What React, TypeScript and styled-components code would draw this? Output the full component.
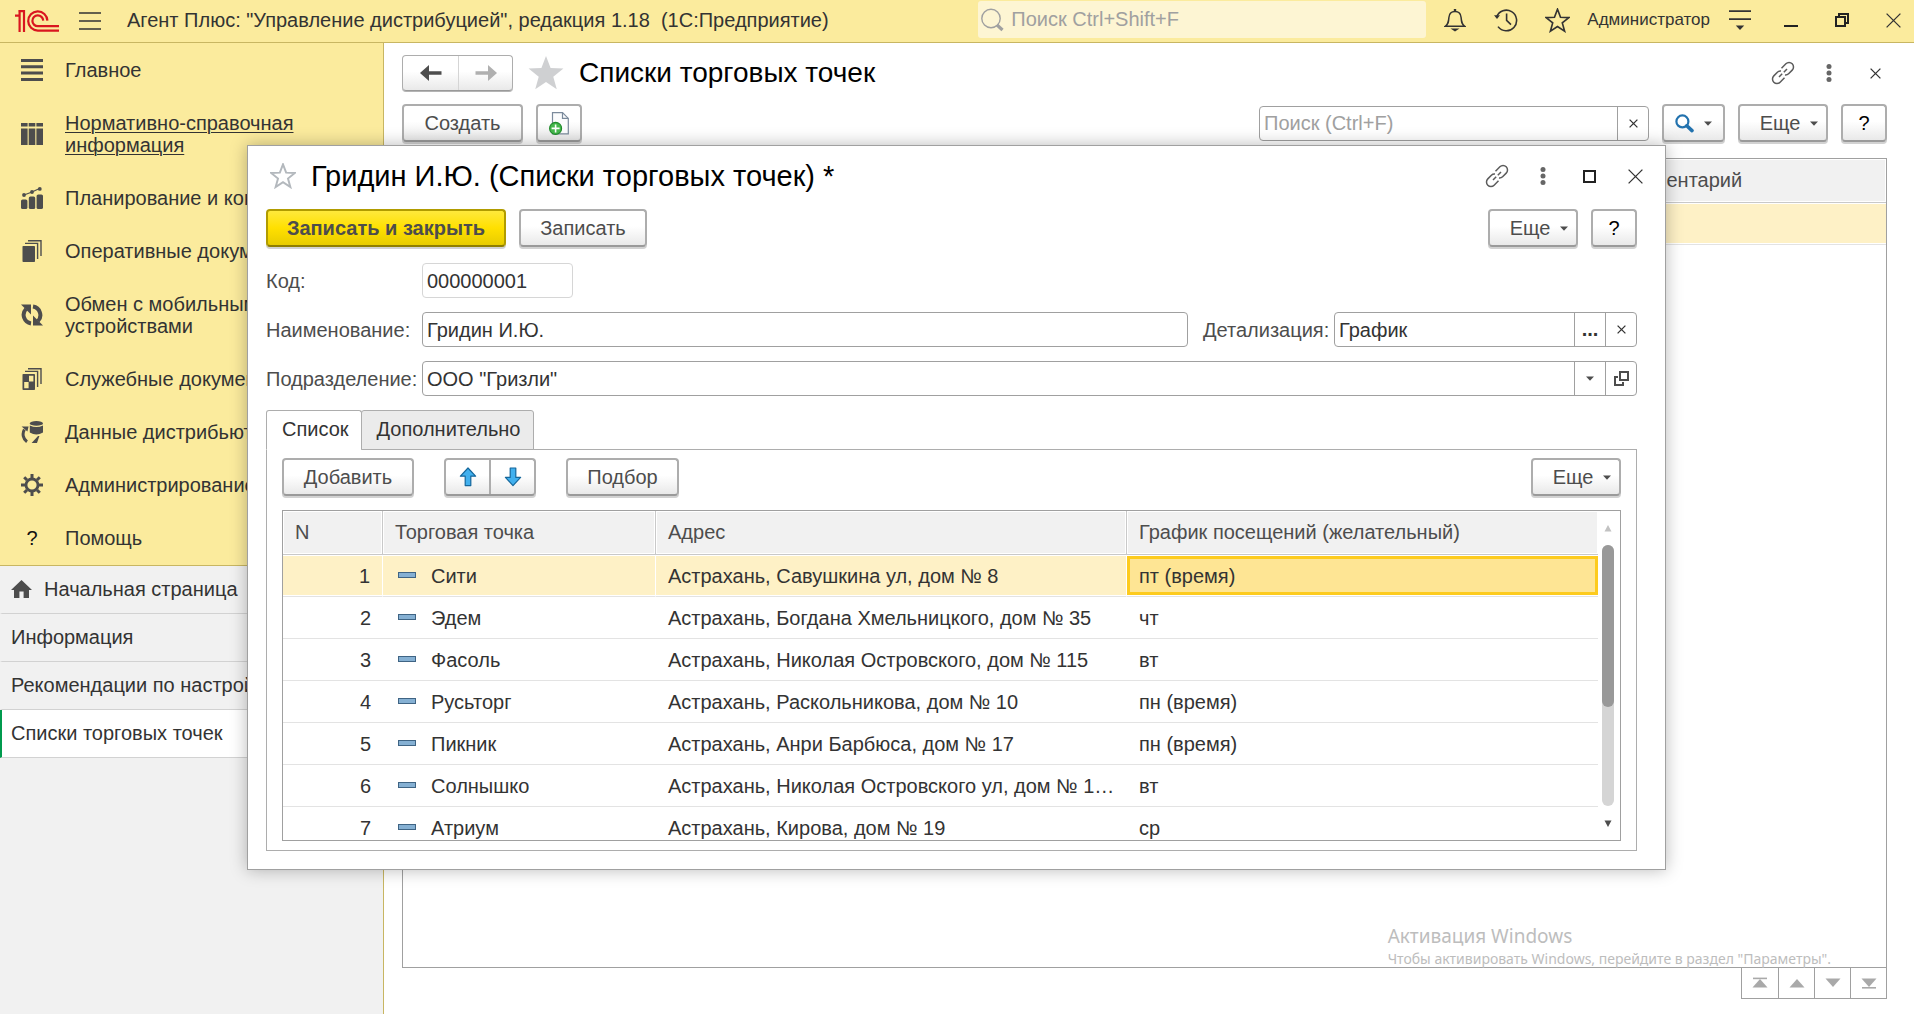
import React from 'react';
import styled, { createGlobalStyle, css } from 'styled-components';

const GlobalStyle = createGlobalStyle`
  *, *::before, *::after { box-sizing: border-box; }
  body { margin: 0; background: #fff; }
  body, button, input, table {
    font-family: "Liberation Sans", Arial, sans-serif;
    font-size: 20px;
    line-height: 23px;
    color: #333;
  }
  button { margin: 0; padding: 0; border: 0; background: none; cursor: pointer; }
  svg { display: block; flex: none; }
`;

const Page = styled.div`
  position: relative;
  display: flex;
  flex-direction: column;
  min-height: 100vh;
  overflow: hidden;
`;

/* ---------- top bar ---------- */

const TopBar = styled.header`
  display: flex;
  align-items: center;
  height: 43px;
  padding: 0 9px 0 15px;
  background: #fbeb9d;
  border-bottom: 1px solid #c8b662;
`;

const IconButton = styled.button<{ $w?: number }>`
  display: flex;
  align-items: center;
  justify-content: center;
  flex: none;
  width: ${p => p.$w ?? 24}px;
  height: 32px;
`;

const MenuButton = styled(IconButton)`
  margin: 0 25px 0 19px;
`;

const AppTitle = styled.div`
  flex: 1;
  white-space: nowrap;
  padding-bottom: 2px;
`;

const GlobalSearch = styled.label`
  display: flex;
  align-items: center;
  gap: 7px;
  width: 448px;
  height: 37px;
  margin-bottom: 4px;
  padding: 1px 0 0 3px;
  border-radius: 3px;
  background: #fdf5d3;
`;

const BareInput = styled.input`
  flex: 1;
  min-width: 0;
  height: 100%;
  padding: 0;
  border: 0;
  outline: 0;
  background: transparent;
  &::placeholder { color: #a0a0a0; opacity: 1; }
`;

const TopIcons = styled.div`
  display: flex;
  align-items: center;
  gap: 27px;
  padding: 0 18px 2px 17px;
`;

const UserLink = styled.a`
  color: #333;
  font-size: 17px;
  text-decoration: none;
  padding-bottom: 4px;
`;

const WindowButtons = styled.div`
  display: flex;
  align-items: center;
  gap: 27px;
  padding: 0 0 2px 18px;
`;

/* ---------- left panel ---------- */

const Body = styled.div`
  display: flex;
  flex: 1;
`;

const Sidebar = styled.aside`
  flex: none;
  width: 384px;
  background: #f1f1f1;
  border-right: 1px solid #c8b662;
`;

const Sections = styled.nav`
  padding-bottom: 1px;
  background: #fbeb9d;
  border-bottom: 1px solid #c8b662;
`;

const Section = styled.a<{ $underlined?: boolean }>`
  display: flex;
  align-items: center;
  gap: 22px;
  padding: 16px 30px 15px 21px;
  color: #333;
  line-height: 22px;
  text-decoration: ${p => (p.$underlined ? 'underline' : 'none')};
  text-underline-offset: 2px;
  text-decoration-thickness: 1px;
`;

const SectionIcon = styled.span`
  display: flex;
  align-items: center;
  justify-content: center;
  flex: none;
  width: 22px;
  height: 22px;
  color: #111;
`;

const OpenPage = styled.a<{ $active?: boolean }>`
  display: flex;
  align-items: center;
  gap: 12px;
  height: 48px;
  padding: 0 12px 1px 9px;
  border-left: 2px solid ${p => (p.$active ? '#009a4d' : 'transparent')};
  border-bottom: 1px solid #d2d2d2;
  background: ${p => (p.$active ? '#fff' : 'transparent')};
  color: #333;
  text-decoration: none;
  white-space: nowrap;
`;

/* ---------- shared form parts ---------- */

const buttonFace = css`
  border: 2px solid #adadad;
  border-bottom-color: #9a9a9a;
  border-radius: 4px;
  background: linear-gradient(#fff 45%, #e9e9e9);
  box-shadow: 0 2px 0 #d2d2d2;
`;

const Button = styled.button<{ $w: number; $primary?: boolean }>`
  display: flex;
  align-items: center;
  justify-content: center;
  flex: none;
  gap: 10px;
  width: ${p => p.$w}px;
  height: 38px;
  color: #4d4d4d;
  ${buttonFace}
  ${p =>
    p.$primary &&
    css`
      border-color: #b19c00;
      border-bottom-color: #8f7e00;
      background: linear-gradient(#ffe93c, #ffe000 50%, #e8cc00);
      font-weight: bold;
    `}
`;

const HelpButton = styled(Button)`
  color: #000;
`;

const MoreButtonBox = styled(Button)`
  padding-left: 12px;
`;

const PairBox = styled.div`
  display: flex;
  flex: none;
  height: 38px;
  ${buttonFace}
`;

const PairHalf = styled.button<{ $w: number; $divider?: boolean }>`
  display: flex;
  align-items: center;
  justify-content: center;
  width: ${p => p.$w}px;
  border-right: ${p => (p.$divider ? '2px solid #adadad' : '0')};
`;

const HistoryBox = styled(PairBox)`
  height: 36px;
  border-width: 1px;
  box-shadow: 0 1px 0 #b4b4b4;
  ${PairHalf}:first-child { border-right: 1px solid #d5d5d5; }
`;

const FieldBox = styled.div<{ $w?: number; $readOnly?: boolean }>`
  display: flex;
  flex: ${p => (p.$w ? 'none' : '1')};
  width: ${p => (p.$w ? `${p.$w}px` : 'auto')};
  height: 35px;
  border: 1px solid ${p => (p.$readOnly ? '#d6d6d6' : '#a0a0a0')};
  border-radius: 4px;
  background: #fff;
  ${BareInput} { padding: 1px 4px 0; }
`;

const FieldButton = styled.button`
  display: flex;
  align-items: center;
  justify-content: center;
  flex: none;
  width: 31px;
  border-left: 1px solid #a0a0a0;
  font-weight: bold;
`;

const Toolbar = styled.div`
  display: flex;
  align-items: center;
  gap: 13px;
`;

const Spacer = styled.div`
  flex: 1;
`;

/* ---------- list page ---------- */

const Main = styled.main`
  display: flex;
  flex-direction: column;
  flex: 1;
  min-width: 0;
  padding: 12px 27px 15px 18px;
`;

const TitleRow = styled.div`
  display: flex;
  align-items: center;
  height: 36px;
  margin-bottom: 13px;
`;

const FormTitle = styled.h1`
  flex: 1;
  margin: 0;
  font-size: 28px;
  line-height: 36px;
  font-weight: normal;
  color: #000;
  white-space: nowrap;
`;

const FavoriteButton = styled(IconButton)`
  margin: 0 14px;
`;

const TitleTools = styled.div`
  display: flex;
  align-items: center;
  gap: 22px;
`;

const SearchGroup = styled.div`
  display: flex;
  gap: 13px;
  align-items: center;
`;

const ListFrame = styled.div`
  flex: 1;
  margin-top: 16px;
  border: 1px solid #a0a0a0;
`;

const Grid = styled.table`
  width: 100%;
  table-layout: fixed;
  border-collapse: separate;
  border-spacing: 0;
`;

const HeadCell = styled.th`
  height: 44px;
  padding: 0 12px 1px;
  border-bottom: 1px solid #c9c9c9;
  background: #f1f1f1;
  box-shadow: inset 0 0 0 1px #fff;
  color: #4d4d4d;
  font-weight: normal;
  text-align: left;
  white-space: nowrap;
  &:not(:last-child) { border-right: 1px solid #c9c9c9; }
`;

const Cell = styled.td<{ $selected?: boolean; $current?: boolean; $right?: boolean }>`
  height: 42px;
  padding: 2px 12px 0;
  overflow: hidden;
  border-bottom: 1px solid #e3e3e3;
  text-align: ${p => (p.$right ? 'right' : 'left')};
  text-overflow: ellipsis;
  white-space: nowrap;
  ${p =>
    p.$selected &&
    css`
      background: #fef1c6;
      box-shadow: inset 0 1px #fff, inset 0 -1px #fff;
      &:not(:last-child) { border-right: 1px solid #fff; }
    `}
  ${p =>
    p.$current &&
    css`
      background: #fee594;
      box-shadow: inset 0 1px #fff, inset 0 -1px #fff, inset 0 4px #fdcb1e,
        inset 0 -4px #fdcb1e, inset 3px 0 #fdcb1e, inset -3px 0 #fdcb1e;
    `}
`;

const Pager = styled.div`
  display: flex;
  align-self: flex-end;
  border: 1px solid #a0a0a0;
  border-top: 0;
`;

const PagerButton = styled.button`
  display: flex;
  align-items: center;
  justify-content: center;
  width: 36px;
  height: 30px;
  & + & { border-left: 1px solid #a0a0a0; }
`;

const Watermark = styled.div`
  position: absolute;
  right: 83px;
  bottom: 45px;
  color: #bdbdbd;
  font-family: "Noto Sans", sans-serif;
  font-size: 14px;
  line-height: 20px;
  white-space: nowrap;
`;

const WatermarkTitle = styled.div`
  font-size: 19px;
  line-height: 26px;
`;

/* ---------- item window ---------- */

const Dialog = styled.section`
  position: absolute;
  top: 145px;
  left: 247px;
  right: 248px;
  padding: 12px 28px 18px 18px;
  border: 1px solid #a0a0a0;
  background: #fff;
  box-shadow: 0 0 16px rgba(0, 0, 0, 0.28);
`;

const DialogTitleRow = styled(TitleRow)`
  margin-bottom: 15px;
`;

const DialogTitle = styled(FormTitle)`
  font-size: 29px;
`;

const DialogStar = styled(IconButton)`
  margin: 0 16px 0 5px;
`;

const DialogTools = styled(TitleTools)`
  margin-right: -10px;
`;

const FormRows = styled.div`
  display: flex;
  flex-direction: column;
  gap: 14px;
  margin: 16px 0 14px;
`;

const FormRow = styled.div`
  display: flex;
  align-items: center;
`;

const Label = styled.label`
  flex: none;
  width: 156px;
  padding-top: 1px;
  color: #4d4d4d;
  white-space: nowrap;
`;

const InlineLabel = styled(Label)`
  width: 131px;
  margin-left: 15px;
`;

const Tabs = styled.div`
  display: flex;
`;

const Tab = styled.button<{ $active?: boolean }>`
  height: 40px;
  padding: 0 12px 1px 15px;
  margin-bottom: -1px;
  border: 1px solid #adadad;
  border-bottom-color: ${p => (p.$active ? '#fff' : '#adadad')};
  border-radius: 3px 3px 0 0;
  background: ${p => (p.$active ? '#fff' : '#ebebeb')};
  & + & { margin-left: -1px; }
`;

const TabPanel = styled.div`
  padding: 8px 15px 9px;
  border: 1px solid #adadad;
`;

const PointsToolbar = styled(Toolbar)`
  gap: 30px;
  margin-bottom: 14px;
`;

const PointsFrame = styled.div`
  display: flex;
  height: 331px;
  overflow: hidden;
  border: 1px solid #a0a0a0;
`;

const PointsGridBox = styled.div`
  flex: 1;
  min-width: 0;
`;

const ScrollBar = styled.div`
  display: flex;
  flex-direction: column;
  flex: none;
  width: 22px;
  padding: 0 6px 0 4px;
`;

const ScrollArrow = styled.button`
  display: flex;
  align-items: center;
  justify-content: center;
  height: 34px;
`;

const ScrollTrack = styled.div`
  flex: 1;
  border-radius: 6px;
  background: #d5d5d5;
`;

const ScrollThumb = styled.div`
  height: 62%;
  border-radius: 6px;
  background: #999;
`;

const PointName = styled.span`
  display: flex;
  align-items: center;
  gap: 15px;
  padding-left: 3px;
`;

const PointMark = styled.span`
  width: 18px;
  height: 6px;
  margin-bottom: 4px;
  border: 1px solid #3f6484;
  background: #85b0d3;
`;

/* ---------- drawings ---------- */

const Logo = () => (
  <svg width="44" height="22" viewBox="0 0 44 22" fill="none" stroke="#d9161f" strokeWidth="2.2">
    <path d="M0 5.6H4.6V22M3.4 1.2H9V22M4.6 1.2V5.6" />
    <path d="M32.4 10.6A9.6 9.6 0 1 0 22.8 20.6H44M28.2 10.6A5.4 5.4 0 1 0 22.8 16.2H44" />
  </svg>
);

const Burger = () => (
  <svg width="22" height="18" viewBox="0 0 22 18" stroke="#333" strokeWidth="1.6">
    <path d="M0 1H22M0 9H22M0 17H22" />
  </svg>
);

const Loupe = () => (
  <svg width="23" height="24" viewBox="0 0 23 24" fill="none" stroke="#a0a0a0">
    <circle cx="10" cy="10.5" r="9.2" strokeWidth="1.4" />
    <path d="M16 17L21.5 22" strokeWidth="3.2" />
  </svg>
);

const Bell = () => (
  <svg width="22" height="24" viewBox="0 0 22 24" fill="none" stroke="#333" strokeWidth="1.5">
    <path d="M1.2 18.3C4.5 16 4.6 13.5 4.9 9.5C5.2 5.6 7.5 3.6 11 3.6S16.8 5.6 17.1 9.5C17.4 13.5 17.5 16 20.8 18.3Z" />
    <path d="M11 1V3.5" strokeWidth="2.4" />
    <path d="M6.5 20.5H15.5L11 23.6Z" fill="#333" stroke="none" />
  </svg>
);

const HistoryIcon = () => (
  <svg width="24" height="24" viewBox="0 0 24 24" fill="none" stroke="#333" strokeWidth="1.6">
    <path d="M2.6 9A10.3 10.3 0 1 1 4 18.6" />
    <path d="M0 7.2L6 7.2L3 11Z" fill="#333" stroke="none" />
    <path d="M12.6 5.5V12.4L17 16.6" />
  </svg>
);

const starPath = 'M12 1.2L14.9 8.9L23 9.2L16.6 14.3L18.8 22.2L12 17.7L5.2 22.2L7.4 14.3L1 9.2L9.1 8.9Z';

const Star = ({ size, stroke, fill = 'none', width = 1.6 }: { size: number; stroke: string; fill?: string; width?: number }) => (
  <svg width={size} height={size} viewBox="0 0 24 24" fill={fill} stroke={stroke} strokeWidth={width}>
    <path d={starPath} />
  </svg>
);

const PanelMenu = () => (
  <svg width="22" height="20" viewBox="0 0 22 20" fill="none" stroke="#333" strokeWidth="1.7">
    <path d="M0 1.2H22M0 9.2H22" />
    <path d="M6.8 15.4H15.2L11 20Z" fill="#333" stroke="none" />
  </svg>
);

const Minimize = () => (
  <svg width="14" height="14" viewBox="0 0 14 14" stroke="#222" strokeWidth="2">
    <path d="M0 13H14" />
  </svg>
);

const Restore = () => (
  <svg width="14" height="14" viewBox="0 0 14 14" fill="none" stroke="#222" strokeWidth="2">
    <path d="M1 4H10V13H1ZM4 4V1H13V10H10" />
  </svg>
);

const Maximize = () => (
  <svg width="13" height="13" viewBox="0 0 13 13" fill="none" stroke="#222" strokeWidth="2">
    <path d="M1 1H12V12H1Z" />
  </svg>
);

const Cross = ({ size, width = 1.3, color = '#333' }: { size: number; width?: number; color?: string }) => (
  <svg width={size} height={size} viewBox={`0 0 ${size} ${size}`} stroke={color} strokeWidth={width}>
    <path d={`M0.6 0.6L${size - 0.6} ${size - 0.6}M${size - 0.6} 0.6L0.6 ${size - 0.6}`} />
  </svg>
);

const LinkIcon = () => (
  <svg width="24" height="24" viewBox="0 0 24 24" fill="none" stroke="#5c5c5c" strokeWidth="1.5">
    <path d="M10.5 7.2L14.9 2.8A4.4 4.4 0 0 1 21.2 9.1L17.6 12.7A4.4 4.4 0 0 1 14 13.9" />
    <path d="M13.5 16.8L9.1 21.2A4.4 4.4 0 0 1 2.8 14.9L6.4 11.3A4.4 4.4 0 0 1 10 10.1" />
    <path d="M8 16L11.2 12.8M12.8 11.2L16 8" />
  </svg>
);

const Dots = () => (
  <svg width="6" height="18" viewBox="0 0 6 18" fill="#666">
    <circle cx="3" cy="2.6" r="2.5" />
    <circle cx="3" cy="9" r="2.5" />
    <circle cx="3" cy="15.4" r="2.5" />
  </svg>
);

const Caret = ({ color = '#4d4d4d' }: { color?: string }) => (
  <svg width="8" height="5" viewBox="0 0 8 5" fill={color}>
    <path d="M0 0.5H8L4 4.8Z" />
  </svg>
);

const NavArrow = ({ color, flip }: { color: string; flip?: boolean }) => (
  <svg width="22" height="16" viewBox="0 0 22 16" fill={color}>
    <path d={flip ? 'M22 8L13 0V6.2H0.5V9.8H13V16Z' : 'M0 8L9 0V6.2H21.5V9.8H9V16Z'} />
  </svg>
);

const MoveArrow = ({ down }: { down?: boolean }) => (
  <svg width="18" height="20" viewBox="0 0 18 20" fill="#41b0ee" stroke="#14679c" strokeWidth="1.2" strokeLinejoin="round">
    <path d={down ? 'M9 18.6L16.6 10.4H11.8V1H6.2V10.4H1.4Z' : 'M9 1L16.6 9.2H11.8V18.6H6.2V9.2H1.4Z'} />
  </svg>
);

const NewDocument = () => (
  <svg width="20" height="23" viewBox="0 0 20 23">
    <path d="M3.5 .6H13.5L19.3 6.4V21.8H3.5Z" fill="#fbfcfd" stroke="#7b8a9c" strokeWidth="1.2" />
    <path d="M13.5 .6V6.4H19.3" fill="none" stroke="#7b8a9c" strokeWidth="1.2" />
    <circle cx="6.6" cy="16.4" r="6" fill="#45b84c" stroke="#208a2c" strokeWidth="1.1" />
    <path d="M2.6 16.4H10.6M6.6 12.4V20.4" stroke="#fff" strokeWidth="1.6" />
  </svg>
);

const FindIcon = () => (
  <svg width="19" height="19" viewBox="0 0 19 19" fill="none" stroke="#2272ae">
    <circle cx="7.4" cy="7.4" r="6" strokeWidth="2.2" />
    <path d="M11.8 11.8L17 16.6" strokeWidth="3.6" strokeLinecap="round" />
  </svg>
);

const OpenIcon = () => (
  <svg width="15" height="15" viewBox="0 0 15 15" fill="none" stroke="#4d4d4d" strokeWidth="2">
    <path d="M6 1H14V9H6Z" />
    <path d="M4 6H1V14H9V11" />
  </svg>
);

const Triangle = ({ down, bar }: { down?: boolean; bar?: boolean }) => (
  <svg width="16" height="12" viewBox="0 0 16 12" fill="#a9a9a9">
    <path d={down ? 'M0.5 1.5H15.5L8 10Z' : 'M0.5 10.5H15.5L8 2Z'} />
    {bar && <path d={down ? 'M1 10H15V11.6H1Z' : 'M1 .6H15V2.2H1Z'} />}
  </svg>
);

const ScrollMark = ({ down, color }: { down?: boolean; color: string }) => (
  <svg width="8" height="7" viewBox="0 0 8 7" fill={color}>
    <path d={down ? 'M0.5 0.5H7.5L4 7Z' : 'M0.5 6.5H7.5L4 0Z'} />
  </svg>
);

const Home = () => (
  <svg width="21" height="18" viewBox="0 0 21 18" fill="#4d4d4d">
    <path d="M10.5 0L21 10H18V18H12.6V11.6H8.4V18H3V10H0Z" />
  </svg>
);

const Glyph = ({ children }: { children: React.ReactNode }) => (
  <svg width="22" height="22" viewBox="0 0 22 22" fill="#4d4d4d">
    {children}
  </svg>
);

const ListGlyph = () => (
  <Glyph><path d="M0 0H22V3H0ZM0 6.3H22V9.3H0ZM0 12.6H22V15.6H0ZM0 19H22V22H0Z" /></Glyph>
);
const ColumnsGlyph = () => (
  <Glyph><path d="M0 0H6.6V3.6H0ZM7.7 0H14.3V3.6H7.7ZM15.4 0H22V3.6H15.4ZM0 5.4H6.6V22H0ZM7.7 5.4H14.3V22H7.7ZM15.4 5.4H22V22H15.4Z" /></Glyph>
);
const ChartGlyph = () => (
  <Glyph>
    <rect x="0" y="12.5" width="6.4" height="9.5" rx="1.6" />
    <rect x="7.8" y="9.5" width="6.4" height="12.5" rx="1.6" />
    <rect x="15.6" y="7.5" width="6.4" height="14.5" rx="1.6" />
    <path d="M3 8L11 5L18.5 1.5" fill="none" stroke="#4d4d4d" strokeWidth="1.2" />
    <circle cx="3" cy="8" r="1.9" /><circle cx="11" cy="5" r="1.9" /><circle cx="18.8" cy="1.9" r="1.9" />
  </Glyph>
);
const StackGlyph = ({ checked }: { checked?: boolean }) => (
  <Glyph>
    <rect x="1.5" y="6" width="12.5" height="16" rx="0.8" />
    <path d="M4 3.4H16.6V19M7 .8H20V16" fill="none" stroke="#4d4d4d" strokeWidth="1.4" />
    {checked && <path d="M8 7.8H12.4V13.6H8ZM3.2 14H7.6V20.2H3.2Z" fill="#fbeb9d" />}
  </Glyph>
);
const ExchangeGlyph = () => (
  <Glyph>
    <path d="M10 19.4A8.6 8.6 0 0 1 5 5M12 2.6A8.6 8.6 0 0 1 17 17" fill="none" stroke="#4d4d4d" strokeWidth="4" />
    <path d="M0 0.6H10V10.4L7 7.4L4 4.6ZM22 21.4H12V11.6L15 14.6L18 17.4Z" />
  </Glyph>
);
const DataGlyph = () => (
  <Glyph>
    <ellipse cx="15.4" cy="2.4" rx="6.6" ry="2.4" />
    <path d="M8.8 4.6Q15.4 7.6 22 4.6V11.4Q15.4 15.4 8.8 11.4Z" />
    <path d="M6 20.8A9.4 9.4 0 0 1 3.4 8.4" fill="none" stroke="#4d4d4d" strokeWidth="3" />
    <path d="M0.6 5.6H7.6L6.4 10.6ZM17 15L10.6 22H16L18.4 15Z" />
  </Glyph>
);
const GearGlyph = () => (
  <svg width="22" height="22" viewBox="0 0 22 22" fill="none" stroke="#4d4d4d">
    <circle cx="11" cy="11" r="6" strokeWidth="2.8" />
    <path d="M11 0V4M11 18V22M0 11H4M18 11H22M3.2 3.2L6 6M16 16L18.8 18.8M3.2 18.8L6 16M16 6L18.8 3.2" strokeWidth="3" />
  </svg>
);

/* ---------- data ---------- */

const sections = [
  { text: 'Главное', icon: <ListGlyph /> },
  { text: 'Нормативно-справочная информация', icon: <ColumnsGlyph />, underlined: true },
  { text: 'Планирование и контроль', icon: <ChartGlyph /> },
  { text: 'Оперативные документы', icon: <StackGlyph /> },
  { text: 'Обмен с мобильными устройствами', icon: <ExchangeGlyph /> },
  { text: 'Служебные документы', icon: <StackGlyph checked /> },
  { text: 'Данные дистрибьютора', icon: <DataGlyph /> },
  { text: 'Администрирование', icon: <GearGlyph /> },
  { text: 'Помощь', icon: '?' },
];

const points = [
  ['Сити', 'Астрахань, Савушкина ул, дом № 8', 'пт (время)'],
  ['Эдем', 'Астрахань, Богдана Хмельницкого, дом № 35', 'чт'],
  ['Фасоль', 'Астрахань, Николая Островского, дом № 115', 'вт'],
  ['Русьторг', 'Астрахань, Раскольникова, дом № 10', 'пн (время)'],
  ['Пикник', 'Астрахань, Анри Барбюса, дом № 17', 'пн (время)'],
  ['Солнышко', 'Астрахань, Николая Островского ул, дом № 148а', 'вт'],
  ['Атриум', 'Астрахань, Кирова, дом № 19', 'ср'],
];

const MoreButton = () => (
  <MoreButtonBox $w={90}>
    Еще
    <Caret />
  </MoreButtonBox>
);

const ItemWindow = () => (
  <Dialog role="dialog" aria-labelledby="item-title">
    <DialogTitleRow>
      <DialogStar aria-label="В избранное"><Star size={26} stroke="#b3b8bd" width={1.8} /></DialogStar>
      <DialogTitle as="h2" id="item-title">Гридин И.Ю. (Списки торговых точек) *</DialogTitle>
      <DialogTools>
        <IconButton aria-label="Ссылка"><LinkIcon /></IconButton>
        <IconButton aria-label="Действия"><Dots /></IconButton>
        <IconButton aria-label="Развернуть"><Maximize /></IconButton>
        <IconButton aria-label="Закрыть"><Cross size={15} /></IconButton>
      </DialogTools>
    </DialogTitleRow>

    <Toolbar>
      <Button $w={240} $primary>Записать и закрыть</Button>
      <Button $w={128}>Записать</Button>
      <Spacer />
      <MoreButton />
      <HelpButton $w={46}>?</HelpButton>
    </Toolbar>

    <FormRows>
      <FormRow>
        <Label htmlFor="code">Код:</Label>
        <FieldBox $w={151} $readOnly><BareInput id="code" defaultValue="000000001" readOnly /></FieldBox>
      </FormRow>
      <FormRow>
        <Label htmlFor="name">Наименование:</Label>
        <FieldBox><BareInput id="name" defaultValue="Гридин И.Ю." /></FieldBox>
        <InlineLabel htmlFor="detail">Детализация:</InlineLabel>
        <FieldBox $w={303}>
          <BareInput id="detail" defaultValue="График" />
          <FieldButton aria-label="Выбрать">...</FieldButton>
          <FieldButton aria-label="Очистить"><Cross size={9} /></FieldButton>
        </FieldBox>
      </FormRow>
      <FormRow>
        <Label htmlFor="division">Подразделение:</Label>
        <FieldBox>
          <BareInput id="division" defaultValue={'ООО "Гризли"'} />
          <FieldButton aria-label="Список"><Caret /></FieldButton>
          <FieldButton aria-label="Открыть"><OpenIcon /></FieldButton>
        </FieldBox>
      </FormRow>
    </FormRows>

    <Tabs role="tablist">
      <Tab role="tab" aria-selected $active>Список</Tab>
      <Tab role="tab" aria-selected={false}>Дополнительно</Tab>
    </Tabs>
    <TabPanel role="tabpanel">
      <PointsToolbar>
        <Button $w={132}>Добавить</Button>
        <PairBox>
          <PairHalf $w={45} $divider aria-label="Вверх"><MoveArrow /></PairHalf>
          <PairHalf $w={43} aria-label="Вниз"><MoveArrow down /></PairHalf>
        </PairBox>
        <Button $w={113}>Подбор</Button>
        <Spacer />
        <MoreButton />
      </PointsToolbar>
      <PointsFrame>
        <PointsGridBox>
          <Grid>
            <colgroup>
              <col style={{ width: 100 }} />
              <col style={{ width: 273 }} />
              <col style={{ width: 471 }} />
              <col />
            </colgroup>
            <thead>
              <tr>
                <HeadCell>N</HeadCell>
                <HeadCell>Торговая точка</HeadCell>
                <HeadCell>Адрес</HeadCell>
                <HeadCell>График посещений (желательный)</HeadCell>
              </tr>
            </thead>
            <tbody>
              {points.map(([name, address, schedule], i) => (
                <tr key={name}>
                  <Cell $right $selected={i === 0}>{i + 1}</Cell>
                  <Cell $selected={i === 0}><PointName><PointMark />{name}</PointName></Cell>
                  <Cell $selected={i === 0}>{address}</Cell>
                  <Cell $selected={i === 0} $current={i === 0}>{schedule}</Cell>
                </tr>
              ))}
            </tbody>
          </Grid>
        </PointsGridBox>
        <ScrollBar>
          <ScrollArrow aria-label="Прокрутить вверх"><ScrollMark color="#c2c2c2" /></ScrollArrow>
          <ScrollTrack><ScrollThumb /></ScrollTrack>
          <ScrollArrow aria-label="Прокрутить вниз"><ScrollMark down color="#4d4d4d" /></ScrollArrow>
        </ScrollBar>
      </PointsFrame>
    </TabPanel>
  </Dialog>
);

export default function App() {
  return (
    <Page>
      <GlobalStyle />
      <TopBar>
        <Logo />
        <MenuButton aria-label="Меню"><Burger /></MenuButton>
        <AppTitle>Агент Плюс: "Управление дистрибуцией", редакция 1.18&nbsp; (1С:Предприятие)</AppTitle>
        <GlobalSearch>
          <Loupe />
          <BareInput placeholder="Поиск Ctrl+Shift+F" aria-label="Глобальный поиск" />
        </GlobalSearch>
        <TopIcons>
          <IconButton aria-label="Оповещения"><Bell /></IconButton>
          <IconButton aria-label="История"><HistoryIcon /></IconButton>
          <IconButton aria-label="Избранное"><Star size={25} stroke="#333" /></IconButton>
        </TopIcons>
        <UserLink href="#">Администратор</UserLink>
        <WindowButtons>
          <IconButton aria-label="Панели"><PanelMenu /></IconButton>
          <IconButton aria-label="Свернуть"><Minimize /></IconButton>
          <IconButton aria-label="Восстановить"><Restore /></IconButton>
          <IconButton aria-label="Закрыть"><Cross size={15} /></IconButton>
        </WindowButtons>
      </TopBar>

      <Body>
        <Sidebar>
          <Sections>
            {sections.map(s => (
              <Section key={s.text} href="#" $underlined={s.underlined}>
                <SectionIcon>{s.icon}</SectionIcon>
                {s.text}
              </Section>
            ))}
          </Sections>
          <OpenPage href="#"><Home />Начальная страница</OpenPage>
          <OpenPage href="#">Информация</OpenPage>
          <OpenPage href="#">Рекомендации по настройке</OpenPage>
          <OpenPage href="#" $active>Списки торговых точек</OpenPage>
        </Sidebar>

        <Main>
          <TitleRow>
            <HistoryBox>
              <PairHalf $w={56} aria-label="Назад"><NavArrow color="#4d4d4d" /></PairHalf>
              <PairHalf $w={53} aria-label="Вперед"><NavArrow color="#b0b0b0" flip /></PairHalf>
            </HistoryBox>
            <FavoriteButton $w={38} aria-label="В избранное"><Star size={38} stroke="none" fill="#cfd0d2" /></FavoriteButton>
            <FormTitle>Списки торговых точек</FormTitle>
            <TitleTools>
              <IconButton aria-label="Ссылка"><LinkIcon /></IconButton>
              <IconButton aria-label="Действия"><Dots /></IconButton>
              <IconButton aria-label="Закрыть"><Cross size={11} /></IconButton>
            </TitleTools>
          </TitleRow>

          <Toolbar>
            <Button $w={121}>Создать</Button>
            <Button $w={46} aria-label="Создать группу"><NewDocument /></Button>
            <Spacer />
            <SearchGroup>
              <FieldBox $w={390}>
                <BareInput placeholder="Поиск (Ctrl+F)" aria-label="Поиск в списке" />
                <FieldButton aria-label="Очистить"><Cross size={9} /></FieldButton>
              </FieldBox>
              <Button $w={63} aria-label="Найти"><FindIcon /><Caret /></Button>
              <MoreButton />
              <HelpButton $w={46}>?</HelpButton>
            </SearchGroup>
          </Toolbar>

          <ListFrame>
            <Grid>
              <colgroup>
                <col style={{ width: '81%' }} />
                <col />
              </colgroup>
              <thead>
                <tr>
                  <HeadCell />
                  <HeadCell>Комментарий</HeadCell>
                </tr>
              </thead>
              <tbody>
                <tr>
                  <Cell $selected />
                  <Cell $selected />
                </tr>
              </tbody>
            </Grid>
          </ListFrame>
          <Pager>
            <PagerButton aria-label="В начало"><Triangle bar /></PagerButton>
            <PagerButton aria-label="Выше"><Triangle /></PagerButton>
            <PagerButton aria-label="Ниже"><Triangle down /></PagerButton>
            <PagerButton aria-label="В конец"><Triangle down bar /></PagerButton>
          </Pager>
        </Main>
      </Body>

      <Watermark>
        <WatermarkTitle>Активация Windows</WatermarkTitle>
        Чтобы активировать Windows, перейдите в раздел "Параметры".
      </Watermark>

      <ItemWindow />
    </Page>
  );
}
